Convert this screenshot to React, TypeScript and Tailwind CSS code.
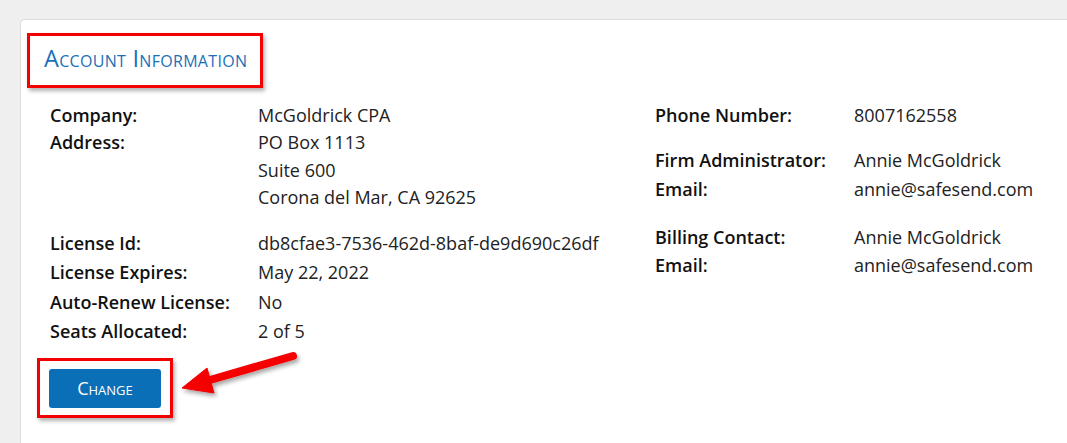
import React from "react";

type Row = { label: string; value: string[] };

const licenseRows: Row[] = [
  { label: "License Id:", value: ["db8cfae3-7536-462d-8baf-de9d690c26df"] },
  { label: "License Expires:", value: ["May 22, 2022"] },
  { label: "Auto-Renew License:", value: ["No"] },
  { label: "Seats Allocated:", value: ["2 of 5"] },
];

const InfoRow = ({ label, value, labelW, lead }: { label: string; value: string[]; labelW: string; lead: string }) => (
  <div className={`flex ${lead}`}>
    <span className={`${labelW} shrink-0 font-semibold text-[#111]`}>{label}</span>
    <div className="flex flex-col text-[#222]">
      {value.map((v) => (
        <span key={v}>{v}</span>
      ))}
    </div>
  </div>
);

const Arrow = () => (
  <svg
    className="absolute left-[175px] top-[345px] pointer-events-none"
    width="130"
    height="60"
    viewBox="0 0 130 60"
  >
    <defs>
      <filter id="sh" x="-20%" y="-20%" width="150%" height="160%">
        <feDropShadow dx="2" dy="3" stdDeviation="2" floodColor="#000" floodOpacity="0.35" />
      </filter>
    </defs>
    <g filter="url(#sh)" fill="#f40000" stroke="#f40000">
      <line x1="118" y1="11" x2="35" y2="35" strokeWidth="8" strokeLinecap="round" />
      <polygon points="7,43 32,23 39,48" strokeWidth="1" strokeLinejoin="round" />
    </g>
  </svg>
);

export default function App() {
  return (
    <div
      className="relative w-[1067px] h-[443px] overflow-hidden bg-[#efefef] text-[18px]"
      style={{ fontFamily: '"Open Sans", "Liberation Sans", sans-serif' }}
    >
      <div className="ml-[20px] mt-[19px] h-[500px] w-[1100px] rounded-[4px] border border-[#dcdcdc] bg-white pt-[13px]">
        <div className="ml-[6px] inline-block border-[3px] border-[#f40000] pl-[14px] pr-[13px] pt-[8px] pb-[13px] shadow-[2px_3px_4px_rgba(0,0,0,0.3)]">
          <h2 className="text-[23.5px] leading-[28px] tracking-[0.3px] text-[#1a70b8] [font-variant:small-caps]">
            Account Information
          </h2>
        </div>

        <div className="mt-[13px] ml-[29px] flex">
          <div className="w-[605px]">
            <InfoRow label="Company:" value={["McGoldrick CPA"]} labelW="w-[208px]" lead="leading-[28px]" />
            <InfoRow
              label="Address:"
              value={["PO Box 1113", "Suite 600", "Corona del Mar, CA 92625"]}
              labelW="w-[208px]"
              lead="leading-[27.7px]"
            />
            <div className="mt-[17px]">
              {licenseRows.map((r) => (
                <InfoRow key={r.label} label={r.label} value={r.value} labelW="w-[208px]" lead="leading-[29.3px]" />
              ))}
            </div>
          </div>
          <div>
            <InfoRow label="Phone Number:" value={["8007162558"]} labelW="w-[199px]" lead="leading-[28px]" />
            <div className="mt-[17px]">
              <InfoRow label="Firm Administrator:" value={["Annie McGoldrick"]} labelW="w-[199px]" lead="leading-[29px]" />
              <InfoRow label="Email:" value={["annie@safesend.com"]} labelW="w-[199px]" lead="leading-[29px]" />
            </div>
            <div className="mt-[19px]">
              <InfoRow label="Billing Contact:" value={["Annie McGoldrick"]} labelW="w-[199px]" lead="leading-[28px]" />
              <InfoRow label="Email:" value={["annie@safesend.com"]} labelW="w-[199px]" lead="leading-[28px]" />
            </div>
          </div>
        </div>

        <div className="ml-[16px] mt-[12px] inline-block border-[3px] border-[#f40000] px-[9px] pt-[8px] pb-[7px] shadow-[2px_3px_4px_rgba(0,0,0,0.3)]">
          <button className="block h-[39px] w-[112px] rounded-[3px] bg-[#0b6fb8] text-[18px] text-white [font-variant:small-caps]">
            Change
          </button>
        </div>
      </div>
      <Arrow />
    </div>
  );
}
